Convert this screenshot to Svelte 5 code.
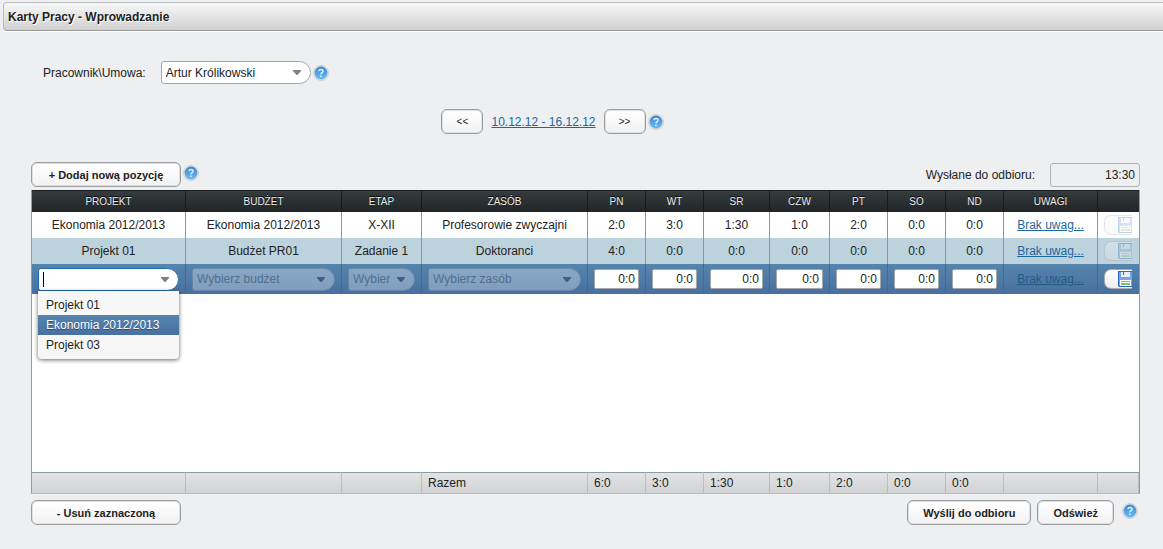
<script lang="ts">
    type Row = { project: string; budget: string; stage: string; resource: string; hours: string[] };

    const days = ['PN', 'WT', 'SR', 'CZW', 'PT', 'SO', 'ND'];
    const columns = ['Projekt', 'Budżet', 'Etap', 'Zasób', ...days, 'Uwagi', ''];
    const widths = [154, 156, 80, 166, 58, 58, 66, 60, 58, 58, 58, 94, 41];
    const projects = ['Projekt 01', 'Ekonomia 2012/2013', 'Projekt 03'];
    const totals = ['6:0', '3:0', '1:30', '1:0', '2:0', '0:0', '0:0'];

    const rows: Row[] = [
        {
            project: 'Ekonomia 2012/2013',
            budget: 'Ekonomia 2012/2013',
            stage: 'X-XII',
            resource: 'Profesorowie zwyczajni',
            hours: ['2:0', '3:0', '1:30', '1:0', '2:0', '0:0', '0:0']
        },
        {
            project: 'Projekt 01',
            budget: 'Budżet PR01',
            stage: 'Zadanie 1',
            resource: 'Doktoranci',
            hours: ['4:0', '0:0', '0:0', '0:0', '0:0', '0:0', '0:0']
        }
    ];

    let employee = $state('Artur Królikowski');
    let project = $state('');
    let menuOpen = $state(true);
    let highlighted = $state(1);
    let entry = $state(days.map(() => '0:0'));

    function choose(index: number) {
        project = projects[index];
        menuOpen = false;
    }

    function handleKeyDown(event: KeyboardEvent) {
        if (event.key === 'ArrowDown') {
            menuOpen = true;
            highlighted = Math.min(highlighted + 1, projects.length - 1);
        }
        if (event.key === 'ArrowUp') highlighted = Math.max(highlighted - 1, 0);
        if (event.key === 'Enter') choose(highlighted);
        if (event.key === 'Escape') menuOpen = false;
    }
</script>

{#snippet help()}
    <button class="help" aria-label="Pomoc">
        <svg width="16" height="16" viewBox="0 0 16 16">
            <defs>
                <linearGradient id="help-fill" x1="0" y1="0" x2="0" y2="1">
                    <stop offset="0" stop-color="#3a86d0" />
                    <stop offset="1" stop-color="#6cbcf6" />
                </linearGradient>
            </defs>
            <circle cx="8" cy="8" r="7.5" fill="#e2e2e2" stroke="#d0d0d0" />
            <circle cx="8" cy="8" r="6.4" fill="url(#help-fill)" />
            <path d="M5.9 6.1C6.1 3.9 10.2 3.9 10.1 6.1C10 7.6 8 7.7 7.9 9.4" fill="none" stroke="#e2f1fd" stroke-width="1.4" />
            <path d="M7.1 10.4H8.7V12H7.1Z" fill="#e2f1fd" />
        </svg>
    </button>
{/snippet}

{#snippet arrow()}
    <svg class="arrow" width="8" height="5" viewBox="0 0 8 5"><path d="M0 0H8V1L4.5 5H3.5L0 1Z" /></svg>
{/snippet}

{#snippet save(disabled: boolean)}
    <button class="save" {disabled} aria-label="Zapisz">
        <svg width="14" height="16" viewBox="0 0 14 16">
            <path d="M0 0H14V16H1L0 15Z" fill="#2f66c4" />
            <path d="M1 1H14V15H1Z" fill="#76a3ea" />
            <path d="M3 1H12V6H3Z" fill="#e6edf8" />
            <path d="M5 1H6V4H5Z" fill="#3b6cc0" />
            <path d="M2 9H13V15H2Z" fill="#fbfdf8" />
            <path d="M3 10H12V11H3ZM3 12H12V14H3Z" fill="#84c65a" />
        </svg>
    </button>
{/snippet}

<div class="page">
    <header class="title-bar">
        <h1>Karty Pracy - Wprowadzanie</h1>
    </header>

    <main>
        <div class="employee">
            <label for="employee">Pracownik\Umowa:</label>
            <div class="combo employee-combo">
                <select id="employee" bind:value={employee}>
                    <option>Artur Królikowski</option>
                </select>
                {@render arrow()}
            </div>
            {@render help()}
        </div>

        <div class="week">
            <button class="btn nav">&lt;&lt;</button>
            <a href="#week">10.12.12 - 16.12.12</a>
            <button class="btn nav">&gt;&gt;</button>
            {@render help()}
        </div>

        <div class="toolbar">
            <button class="btn wide">+ Dodaj nową pozycję</button>
            {@render help()}
            <label class="sent-label" for="sent">Wysłane do odbioru:</label>
            <input class="sent" id="sent" value="13:30" readonly />
        </div>

        <table>
            <colgroup>
                {#each widths as width}
                    <col style="width: {width}px" />
                {/each}
            </colgroup>
            <thead>
                <tr>
                    {#each columns as column}
                        <th>{column}</th>
                    {/each}
                </tr>
            </thead>
            <tbody>
                {#each rows as row, i}
                    <tr class="row" class:odd={i % 2 === 1}>
                        <td>{row.project}</td>
                        <td>{row.budget}</td>
                        <td>{row.stage}</td>
                        <td>{row.resource}</td>
                        {#each row.hours as value}
                            <td>{value}</td>
                        {/each}
                        <td><a href="#notes">Brak uwag...</a></td>
                        <td>{@render save(true)}</td>
                    </tr>
                {/each}
                <tr class="row selected">
                    <td>
                        <div class="combo active">
                            <input
                                role="combobox"
                                aria-label="Projekt"
                                aria-expanded={menuOpen}
                                aria-controls="project-menu"
                                bind:value={project}
                                onkeydown={handleKeyDown}
                            />
                            {#if !project}<span class="caret"></span>{/if}
                            {@render arrow()}
                            {#if menuOpen}
                                <ul id="project-menu" class="menu" role="listbox">
                                    {#each projects as name, i}
                                        <li role="option" aria-selected={highlighted === i}>
                                            <button tabindex="-1" onclick={() => choose(i)}>{name}</button>
                                        </li>
                                    {/each}
                                </ul>
                            {/if}
                        </div>
                    </td>
                    {#each ['budżet', 'etap', 'zasób'] as name}
                        <td>
                            <div class="combo disabled">
                                <select disabled aria-label={name}>
                                    <option>Wybierz {name}</option>
                                </select>
                                {@render arrow()}
                            </div>
                        </td>
                    {/each}
                    {#each days as day, i}
                        <td><input class="hours" aria-label={day} bind:value={entry[i]} /></td>
                    {/each}
                    <td><a class="muted" href="#notes">Brak uwag...</a></td>
                    <td>{@render save(false)}</td>
                </tr>
                <tr class="filler">
                    <td colspan="13"></td>
                </tr>
            </tbody>
            <tfoot>
                <tr>
                    <td></td>
                    <td></td>
                    <td></td>
                    <td>Razem</td>
                    {#each totals as total}
                        <td>{total}</td>
                    {/each}
                    <td></td>
                    <td></td>
                </tr>
            </tfoot>
        </table>

        <div class="actions">
            <button class="btn wide remove">- Usuń zaznaczoną</button>
            <button class="btn">Wyślij do odbioru</button>
            <button class="btn">Odśwież</button>
            {@render help()}
        </div>
    </main>
</div>

<style>
    :global(body) {
        margin: 0;
        background: #eeeff1;
    }

    .page,
    .page button,
    .page input,
    .page select {
        font-family: "Liberation Sans", Arial, sans-serif;
        font-size: 12px;
        color: #222;
    }

    .page * {
        box-sizing: border-box;
    }

    .page {
        min-height: 100vh;
        padding-top: 2px;
        box-sizing: border-box;
        background: #eeeff1;
    }

    .title-bar {
        display: flex;
        align-items: center;
        height: 29px;
        margin-left: 3px;
        padding-left: 4px;
        border: 1px solid #b9bbbd;
        border-right: none;
        border-bottom-color: #999;
        border-radius: 4px 0 0 4px;
        background: linear-gradient(#f8f8f8, #d0d0d0);
        box-shadow: 0 1px 0 #fff;
    }

    h1 {
        margin: 0;
        font-size: 12px;
        text-shadow: 1px 1px 0 #fff;
    }

    main {
        padding: 30px 23px 0 31px;
    }

    a {
        color: #1b699f;
    }

    .employee,
    .week,
    .toolbar,
    .actions {
        display: flex;
        align-items: center;
    }

    .employee {
        padding-left: 12px;
    }

    .employee-combo {
        width: 150px;
        margin: 0 2px 0 15px;
    }

    .week {
        justify-content: center;
        margin: 25px 66px 0 0;
    }

    .week a {
        margin: 0 8px;
    }

    .toolbar {
        margin-top: 28px;
        padding-bottom: 3px;
    }

    .sent-label {
        margin-left: auto;
    }

    .page .sent {
        width: 90px;
        height: 24px;
        margin-left: 15px;
        padding: 0 4px;
        border: 1px solid #b0b2b4;
        border-radius: 3px;
        background: #eeeff1;
        text-align: right;
    }

    .help {
        display: block;
        flex: none;
        width: 16px;
        height: 16px;
        margin: 0 0 0 2px;
        padding: 0;
        border: none;
        background: none;
    }

    .help svg {
        display: block;
    }

    .employee .help {
        margin-left: 0;
    }

    .toolbar .help,
    .actions .help {
        margin-bottom: 4px;
    }

    .page .btn {
        height: 25px;
        padding: 0 15px;
        border: 1px solid #9b9c9e;
        border-radius: 6px;
        background: linear-gradient(#fff, #f2f2f2);
        box-shadow: inset 0 0 0 1px #dfe0e1;
        font-size: 11px;
        font-weight: bold;
    }

    .page .btn.wide {
        width: 150px;
    }

    .page .btn.nav {
        width: 42px;
        padding: 0;
        font-size: 10px;
        font-weight: normal;
    }

    .combo {
        position: relative;
        height: 23px;
    }

    .combo select,
    .combo input {
        display: block;
        width: 100%;
        height: 100%;
        margin: 0;
        padding: 0 24px 0 4px;
        border: 1px solid #a5a7a9;
        border-radius: 3px 12px 12px 3px;
        outline: none;
        appearance: none;
        background: #fff;
        opacity: 1;
    }

    .combo.active input {
        border-color: #1d6cb5;
    }

    .combo.disabled {
        opacity: 0.3;
    }

    .page .combo.disabled select {
        color: #555;
    }

    .arrow {
        position: absolute;
        top: 9px;
        right: 10px;
        fill: #808080;
        pointer-events: none;
    }

    .disabled .arrow {
        fill: #222;
    }

    .caret {
        position: absolute;
        top: 4px;
        left: 5px;
        width: 1px;
        height: 15px;
        background: #000;
    }

    .menu {
        position: absolute;
        z-index: 10;
        top: 100%;
        left: 0;
        width: 100%;
        margin: 0;
        padding: 4px 0;
        border-radius: 0 0 4px 4px;
        background: #f7f7f7;
        box-shadow: 0 1px 4px rgba(0, 0, 0, 0.6);
        list-style: none;
    }

    .menu button {
        display: block;
        width: 100%;
        height: 20px;
        padding: 0 8px;
        border: none;
        background: none;
        text-align: left;
    }

    .page .menu [aria-selected="true"] button {
        background: linear-gradient(#5585ae, #4870a0);
        color: #fff;
        text-shadow: 0 1px 0 #2c4c70;
    }

    table {
        width: 100%;
        table-layout: fixed;
        border-collapse: separate;
        border-spacing: 0;
        border: 1px solid #8f9ba3;
        border-top: none;
        border-bottom: 1px solid #bbb;
        background: #fff;
    }

    th {
        height: 22px;
        padding: 0;
        border-right: 1px solid #181b1d;
        border-top: 1px solid #1c1f21;
        background: linear-gradient(#363b3e, #212528);
        color: #eee;
        font-size: 10px;
        font-weight: normal;
        text-transform: uppercase;
        text-shadow: 0 -1px 0 #000;
    }

    .row td {
        height: 26px;
        padding: 0 6px;
        border-right: 1px solid #929292;
        text-align: center;
        white-space: nowrap;
    }

    .row td:last-child,
    th:last-child {
        border-right: none;
    }

    .row.odd td {
        background: #bcd2dc;
    }

    .row.selected td {
        height: 30px;
        border-color: #456a90;
        background: linear-gradient(#5585ad, #496f9f);
    }

    .page .hours {
        display: block;
        width: 100%;
        height: 20px;
        padding: 0 3px;
        border: 1px solid #a3a8ad;
        border-radius: 2px;
        background: #fff;
        text-align: right;
    }

    .muted {
        color: #235b88;
    }

    .save {
        display: flex;
        justify-content: flex-end;
        align-items: center;
        width: 28px;
        height: 20px;
        padding: 0;
        overflow: hidden;
        border: 1px solid #aaa;
        border-right: none;
        border-radius: 7px 0 0 7px;
        background: linear-gradient(#fff, #eee);
    }

    .save svg {
        flex: none;
    }

    .save:disabled {
        opacity: 0.3;
    }

    .filler td {
        height: 178px;
        padding: 0;
    }

    tfoot td {
        height: 21px;
        padding: 0 6px;
        border-top: 1px solid #8f9ba3;
        border-right: 1px solid #bbbdbf;
        background: linear-gradient(#e2e3e4, #d2d3d4);
    }

    .actions {
        margin-top: 6px;
        padding-right: 2px;
        gap: 6px;
    }

    .actions .remove {
        margin-right: auto;
    }
</style>
